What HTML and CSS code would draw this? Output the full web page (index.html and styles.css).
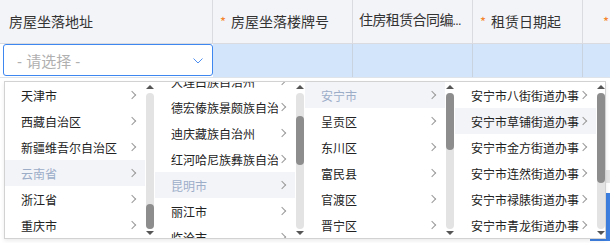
FILE: index.html
```
<!DOCTYPE html>
<html lang="zh">
<head>
    <meta charset="UTF-8">
    <meta name="viewport" content="width=device-width, initial-scale=1.0">
    <title>房屋租赁登记</title>
    <link rel="stylesheet" href="styles.css">
</head>
<body>

    <div class="sheet">
        <div class="row head">
            <div class="cell c1">房屋坐落地址</div>
            <div class="cell c2"><span class="req">*</span>房屋坐落楼牌号</div>
            <div class="cell c3">住房租赁合同编号</div>
            <div class="cell c4"><span class="req">*</span>租赁日期起</div>
            <div class="cell c5"><span class="req">*</span></div>
        </div>
        <div class="row edit">
            <div class="cell c1">
                <div class="picker">
                    <span class="placeholder">- 请选择 -</span>
                    <svg class="caret" width="10" height="6" viewBox="0 0 10 6"><polyline points="0.5,0.5 5,5 9.5,0.5" fill="none" stroke="#4d8ef0" stroke-width="1"/></svg>
                </div>
            </div>
            <div class="cell c2"></div>
            <div class="cell c3"></div>
            <div class="cell c4"></div>
            <div class="cell c5"></div>
        </div>
        <div class="body">
            <div class="hscroll"></div>
            <div class="toolbar"></div>
        </div>

        <div class="cascader">
            <div class="cas-col">
                <ul class="cas-list">
                    <li><span>天津市</span></li>
                    <li><span>西藏自治区</span></li>
                    <li><span>新疆维吾尔自治区</span></li>
                    <li class="active"><span>云南省</span></li>
                    <li><span>浙江省</span></li>
                    <li><span>重庆市</span></li>
                </ul>
                <div class="cas-bar"><i class="up"></i><div class="track"><div class="thumb" style="margin-top:111px;height:25px"></div></div><i class="down"></i></div>
            </div>
            <div class="cas-col">
                <ul class="cas-list offset">
                    <li><span>大理白族自治州</span></li>
                    <li><span>德宏傣族景颇族自治州</span></li>
                    <li><span>迪庆藏族自治州</span></li>
                    <li><span>红河哈尼族彝族自治州</span></li>
                    <li class="active"><span>昆明市</span></li>
                    <li><span>丽江市</span></li>
                    <li><span>临沧市</span></li>
                </ul>
                <div class="cas-bar"><i class="up"></i><div class="track"><div class="thumb" style="margin-top:23px;height:49px"></div></div><i class="down"></i></div>
            </div>
            <div class="cas-col">
                <ul class="cas-list">
                    <li class="active"><span>安宁市</span></li>
                    <li><span>呈贡区</span></li>
                    <li><span>东川区</span></li>
                    <li><span>富民县</span></li>
                    <li><span>官渡区</span></li>
                    <li><span>晋宁区</span></li>
                </ul>
                <div class="cas-bar"><i class="up"></i><div class="track"><div class="thumb" style="margin-top:0;height:57px"></div></div><i class="down"></i></div>
            </div>
            <div class="cas-col last">
                <ul class="cas-list">
                    <li><span>安宁市八街街道办事处</span></li>
                    <li class="hover"><span>安宁市草铺街道办事处</span></li>
                    <li><span>安宁市金方街道办事处</span></li>
                    <li><span>安宁市连然街道办事处</span></li>
                    <li><span>安宁市禄脿街道办事处</span></li>
                    <li><span>安宁市青龙街道办事处</span></li>
                </ul>
                <div class="cas-bar"><i class="up"></i><div class="track"><div class="thumb" style="margin-top:0;height:90px"></div></div><i class="down"></i></div>
            </div>
        </div>
    </div>

</body>
</html>
```

FILE: styles.css
```
* {
    margin: 0;
    padding: 0;
    box-sizing: border-box;
}
body {
    font-family: "Noto Sans CJK SC", "Noto Sans", sans-serif;
    background: #fff;
    color: #333;
    width: 610px;
    height: 243px;
    overflow: hidden;
}
.sheet {
    position: relative;
    height: 243px;
}
.row {
    display: flex;
    white-space: nowrap;
}
.cell {
    flex: none;
    display: flex;
    align-items: center;
    overflow: hidden;
    border-right: 1px solid #d9dbe1;
}
.c1 { width: 213px; }
.c2 { width: 140px; }
.c3 { width: 120px; }
.c4 { width: 110px; }
.c5 { width: 27px; border-right: none; }

.head {
    height: 44px;
    background: #f3f4f8;
    border-bottom: 1px solid #d9dbe1;
    font-size: 14px;
}
.head .cell {
    padding: 0 7px;
    padding-bottom: 1px;
}
.head .c1 { padding-left: 9px; }
.head .c3 {
    display: block;
    line-height: 42px;
    padding: 0 9px 0 6px;
    font-family: "Liberation Mono", "Noto Sans CJK SC", monospace;
    letter-spacing: -0.6px;
    text-overflow: ellipsis;
}
.head .c5 { padding-left: 20px; }
.req {
    color: #f5832b;
    font-size: 13px;
    margin-right: 5px;
}

.edit {
    height: 34px;
    background: #d3e5fb;
    border-bottom: 1px solid #dfe4ea;
}
.edit .cell { border-right-color: #c9d3df; }
.edit .c1 {
    background: #fff;
    border-right: none;
    padding-left: 3px;
    align-items: stretch;
    padding-bottom: 1px;
}
.picker {
    flex: 1;
    border: 1px solid #3f87f0;
    border-radius: 3px;
    background: #fff;
    display: flex;
    align-items: center;
    padding: 0 9px 0 13px;
}
.placeholder {
    flex: 1;
    font-family: "Liberation Sans", "Noto Sans CJK SC", sans-serif;
    font-size: 15px;
    color: #b0b0b0;
}
.caret { display: block; margin-top: 1px; }

.body {
    height: 165px;
    display: flex;
    flex-direction: column;
    align-items: flex-end;
}
.hscroll {
    margin-top: 92px;
    width: 20px;
    height: 13px;
    background: #e6e6e6;
}
.toolbar {
    margin-top: 10px;
    width: 20px;
    height: 48px;
    background: #3d7fe0;
}

/* cascading dropdown */
.cascader {
    position: absolute;
    left: 4px;
    top: 81px;
    width: 602px;
    height: 158px;
    border: 1px solid #d2d2d2;
    background: #fff;
    display: flex;
    box-shadow: 0 2px 4px rgba(0, 0, 0, 0.08);
}
.cas-col {
    width: 150px;
    display: flex;
}
.cas-list {
    list-style: none;
    width: 140px;
    height: 156px;
    overflow: hidden;
}
.cas-col.last .cas-list { width: 142px; }
.cas-list.offset li:first-child { margin-top: -14px; }
.cas-list li {
    height: 26px;
    display: flex;
    align-items: center;
    padding: 0 8px 0 16px;
    font-size: 12px;
    color: #222;
    white-space: nowrap;
}
.cas-list li span {
    flex: 1;
    min-width: 0;
    overflow: hidden;
}
.cas-list li::after {
    content: "";
    flex: none;
    width: 5px;
    height: 5px;
    border-top: 1px solid #9a9a9a;
    border-right: 1px solid #9a9a9a;
    transform: rotate(45deg);
    margin-left: 1px;
    margin-right: 2px;
}
.cas-list li.active,
.cas-list li.hover {
    background: #f3f4f8;
}
.cas-list li.active { color: #9cadc8; }

.cas-bar {
    width: 8px;
    margin-left: 1px;
    display: flex;
    flex-direction: column;
    align-items: center;
    padding: 3px 0;
}
.cas-bar i {
    width: 0;
    height: 0;
    border-left: 4px solid transparent;
    border-right: 4px solid transparent;
}
.cas-bar .up {
    border-bottom: 4px solid #555;
    margin-bottom: 4px;
}
.cas-bar .down {
    border-top: 4px solid #555;
    margin-top: 2px;
}
.track {
    flex: 1;
    width: 8px;
    border-radius: 4px;
    background: #e3e3e3;
}
.thumb {
    width: 8px;
    border-radius: 4px;
    background: #8d8d8d;
}
```
